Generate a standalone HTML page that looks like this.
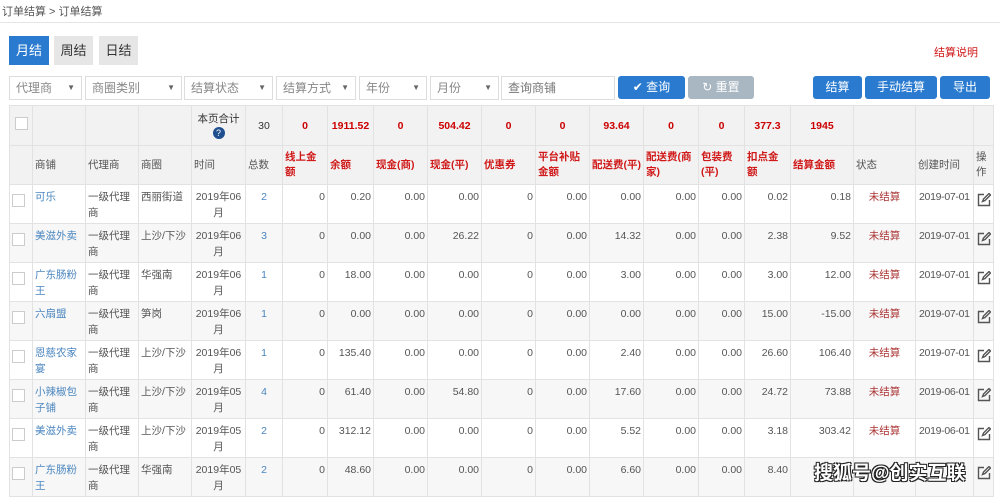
<!DOCTYPE html>
<html><head><meta charset="utf-8"><style>
*{box-sizing:border-box;margin:0;padding:0}
body{width:1000px;height:493px;overflow:hidden;background:#fff;font-family:"Liberation Sans","Noto Sans CJK SC",sans-serif;font-size:11px;color:#333;position:relative}
.a{position:absolute}
.crumb{left:2px;top:3px;font-size:11px;color:#555}
.line{left:0;top:22px;width:1000px;height:1px;background:#e5e5e5}
.tab{top:36px;height:29px;line-height:29px;text-align:center;font-size:13px;background:#e6e6e6;color:#333}
.sel{top:76px;height:24px;border:1px solid #ddd;color:#888;font-size:12px;line-height:22px;padding-left:6px;background:#fff}
.sel i{position:absolute;right:6px;top:0;font-style:normal;font-size:8px;color:#666}
.btn{top:76px;height:23px;line-height:23px;border-radius:3px;color:#fff;text-align:center;font-size:12px;background:#2a7bd0}
table{position:absolute;left:9px;top:105px;border-collapse:collapse;table-layout:fixed;width:984px}
td{border:1px solid #e2e2e2;vertical-align:top;padding:4px 2px 0;font-size:10.5px;line-height:16px;overflow:hidden}
tr.h1 td{height:40px;background:#f2f2f2;text-align:center;vertical-align:middle;color:#c00;font-weight:bold;line-height:14px;padding:0 2px}
tr.h2 td{height:39px;background:#f2f2f2;vertical-align:middle;color:#555;line-height:15px;padding:0 2px}
tr.h2 td.r{color:#d01818;font-weight:bold}
tr.d td{height:39px;color:#555}
tr.d:nth-child(even) td{background:#f7f7f7}
tr.d td.n{text-align:right}
tr.d td.l{color:#4a86bf}
tr.d td.c{text-align:center}
tr.d td.s{color:#a33;text-align:center}
tr.d td.dt{font-size:10.5px;padding:4px 1px 0 3px;white-space:nowrap;letter-spacing:-0.3px}
tr.d td.e{padding:8px 1px 0 3px}
.cb{display:inline-block;width:13px;height:13px;border:1px solid #ccc;background:#fff;margin-top:5px}
</style></head><body>
<div class="a crumb">订单结算 &gt; 订单结算</div>
<div class="a line"></div>
<div class="a tab" style="left:9px;width:40px;background:#2a7bd0;color:#fff">月结</div>
<div class="a tab" style="left:54px;width:39px">周结</div>
<div class="a tab" style="left:99px;width:39px">日结</div>
<div class="a" style="left:934px;top:44px;color:#d01818;font-size:11px">结算说明</div>
<div class="a sel" style="left:9px;width:73px">代理商<i>▼</i></div>
<div class="a sel" style="left:85px;width:97px">商圈类别<i>▼</i></div>
<div class="a sel" style="left:184px;width:89px">结算状态<i>▼</i></div>
<div class="a sel" style="left:276px;width:80px">结算方式<i>▼</i></div>
<div class="a sel" style="left:359px;width:68px">年份<i>▼</i></div>
<div class="a sel" style="left:430px;width:69px">月份<i>▼</i></div>
<div class="a sel" style="left:501px;width:114px;color:#777">查询商铺</div>
<div class="a btn" style="left:618px;width:67px">✔ 查询</div>
<div class="a btn" style="left:688px;width:66px;background:#a9b7c2">↻ 重置</div>
<div class="a btn" style="left:813px;width:49px">结算</div>
<div class="a btn" style="left:865px;width:72px">手动结算</div>
<div class="a btn" style="left:940px;width:50px">导出</div>
<table>
<colgroup><col style="width:23px"><col style="width:53px"><col style="width:53px"><col style="width:53px"><col style="width:54px"><col style="width:37px"><col style="width:45px"><col style="width:46px"><col style="width:54px"><col style="width:54px"><col style="width:54px"><col style="width:54px"><col style="width:54px"><col style="width:55px"><col style="width:46px"><col style="width:46px"><col style="width:63px"><col style="width:62px"><col style="width:58px"><col style="width:20px"></colgroup>
<tr class="h1"><td><span class="cb" style="margin:0"></span></td><td></td><td></td><td></td><td style="color:#333;font-weight:normal">本页合计<br><span style="display:inline-block;width:12px;height:12px;border-radius:6px;background:#1f4f8f;color:#fff;font-size:9px;line-height:12px">?</span></td><td style="color:#333;font-weight:normal">30</td><td>0</td><td>1911.52</td><td>0</td><td>504.42</td><td>0</td><td>0</td><td>93.64</td><td>0</td><td>0</td><td>377.3</td><td>1945</td><td></td><td></td><td></td></tr>
<tr class="h2"><td></td><td>商铺</td><td>代理商</td><td>商圈</td><td>时间</td><td>总数</td><td class="r">线上金额</td><td class="r">余额</td><td class="r">现金(商)</td><td class="r">现金(平)</td><td class="r">优惠券</td><td class="r">平台补贴金额</td><td class="r" style="white-space:nowrap">配送费(平)</td><td class="r">配送费(商家)</td><td class="r">包装费(平)</td><td class="r">扣点金额</td><td class="r">结算金额</td><td>状态</td><td>创建时间</td><td style="padding:2px">操作</td></tr>
<tr class="d"><td><span class="cb"></span></td><td class="l">可乐</td><td>一级代理<br>商</td><td>西丽街道</td><td class="c">2019年06<br>月</td><td class="c l">2</td><td class="n">0</td><td class="n">0.20</td><td class="n">0.00</td><td class="n">0.00</td><td class="n">0</td><td class="n">0.00</td><td class="n">0.00</td><td class="n">0.00</td><td class="n">0.00</td><td class="n">0.02</td><td class="n">0.18</td><td class="s">未结算</td><td class="dt">2019-07-01</td><td class="e"><svg width="14" height="14" viewBox="0 0 14 14" fill="none" stroke="#555" stroke-width="1.4"><path d="M7 1.5H1.5v11h11V7"/><path d="M5.5 8.5l1-2.5 5.5-5.5 1.5 1.5-5.5 5.5z"/></svg></td></tr>
<tr class="d"><td><span class="cb"></span></td><td class="l">美滋外卖</td><td>一级代理<br>商</td><td>上沙/下沙</td><td class="c">2019年06<br>月</td><td class="c l">3</td><td class="n">0</td><td class="n">0.00</td><td class="n">0.00</td><td class="n">26.22</td><td class="n">0</td><td class="n">0.00</td><td class="n">14.32</td><td class="n">0.00</td><td class="n">0.00</td><td class="n">2.38</td><td class="n">9.52</td><td class="s">未结算</td><td class="dt">2019-07-01</td><td class="e"><svg width="14" height="14" viewBox="0 0 14 14" fill="none" stroke="#555" stroke-width="1.4"><path d="M7 1.5H1.5v11h11V7"/><path d="M5.5 8.5l1-2.5 5.5-5.5 1.5 1.5-5.5 5.5z"/></svg></td></tr>
<tr class="d"><td><span class="cb"></span></td><td class="l">广东肠粉<br>王</td><td>一级代理<br>商</td><td>华强南</td><td class="c">2019年06<br>月</td><td class="c l">1</td><td class="n">0</td><td class="n">18.00</td><td class="n">0.00</td><td class="n">0.00</td><td class="n">0</td><td class="n">0.00</td><td class="n">3.00</td><td class="n">0.00</td><td class="n">0.00</td><td class="n">3.00</td><td class="n">12.00</td><td class="s">未结算</td><td class="dt">2019-07-01</td><td class="e"><svg width="14" height="14" viewBox="0 0 14 14" fill="none" stroke="#555" stroke-width="1.4"><path d="M7 1.5H1.5v11h11V7"/><path d="M5.5 8.5l1-2.5 5.5-5.5 1.5 1.5-5.5 5.5z"/></svg></td></tr>
<tr class="d"><td><span class="cb"></span></td><td class="l">六扇盟</td><td>一级代理<br>商</td><td>笋岗</td><td class="c">2019年06<br>月</td><td class="c l">1</td><td class="n">0</td><td class="n">0.00</td><td class="n">0.00</td><td class="n">0.00</td><td class="n">0</td><td class="n">0.00</td><td class="n">0.00</td><td class="n">0.00</td><td class="n">0.00</td><td class="n">15.00</td><td class="n">-15.00</td><td class="s">未结算</td><td class="dt">2019-07-01</td><td class="e"><svg width="14" height="14" viewBox="0 0 14 14" fill="none" stroke="#555" stroke-width="1.4"><path d="M7 1.5H1.5v11h11V7"/><path d="M5.5 8.5l1-2.5 5.5-5.5 1.5 1.5-5.5 5.5z"/></svg></td></tr>
<tr class="d"><td><span class="cb"></span></td><td class="l">恩慈农家<br>宴</td><td>一级代理<br>商</td><td>上沙/下沙</td><td class="c">2019年06<br>月</td><td class="c l">1</td><td class="n">0</td><td class="n">135.40</td><td class="n">0.00</td><td class="n">0.00</td><td class="n">0</td><td class="n">0.00</td><td class="n">2.40</td><td class="n">0.00</td><td class="n">0.00</td><td class="n">26.60</td><td class="n">106.40</td><td class="s">未结算</td><td class="dt">2019-07-01</td><td class="e"><svg width="14" height="14" viewBox="0 0 14 14" fill="none" stroke="#555" stroke-width="1.4"><path d="M7 1.5H1.5v11h11V7"/><path d="M5.5 8.5l1-2.5 5.5-5.5 1.5 1.5-5.5 5.5z"/></svg></td></tr>
<tr class="d"><td><span class="cb"></span></td><td class="l">小辣椒包<br>子铺</td><td>一级代理<br>商</td><td>上沙/下沙</td><td class="c">2019年05<br>月</td><td class="c l">4</td><td class="n">0</td><td class="n">61.40</td><td class="n">0.00</td><td class="n">54.80</td><td class="n">0</td><td class="n">0.00</td><td class="n">17.60</td><td class="n">0.00</td><td class="n">0.00</td><td class="n">24.72</td><td class="n">73.88</td><td class="s">未结算</td><td class="dt">2019-06-01</td><td class="e"><svg width="14" height="14" viewBox="0 0 14 14" fill="none" stroke="#555" stroke-width="1.4"><path d="M7 1.5H1.5v11h11V7"/><path d="M5.5 8.5l1-2.5 5.5-5.5 1.5 1.5-5.5 5.5z"/></svg></td></tr>
<tr class="d"><td><span class="cb"></span></td><td class="l">美滋外卖</td><td>一级代理<br>商</td><td>上沙/下沙</td><td class="c">2019年05<br>月</td><td class="c l">2</td><td class="n">0</td><td class="n">312.12</td><td class="n">0.00</td><td class="n">0.00</td><td class="n">0</td><td class="n">0.00</td><td class="n">5.52</td><td class="n">0.00</td><td class="n">0.00</td><td class="n">3.18</td><td class="n">303.42</td><td class="s">未结算</td><td class="dt">2019-06-01</td><td class="e"><svg width="14" height="14" viewBox="0 0 14 14" fill="none" stroke="#555" stroke-width="1.4"><path d="M7 1.5H1.5v11h11V7"/><path d="M5.5 8.5l1-2.5 5.5-5.5 1.5 1.5-5.5 5.5z"/></svg></td></tr>
<tr class="d"><td><span class="cb"></span></td><td class="l">广东肠粉<br>王</td><td>一级代理<br>商</td><td>华强南</td><td class="c">2019年05<br>月</td><td class="c l">2</td><td class="n">0</td><td class="n">48.60</td><td class="n">0.00</td><td class="n">0.00</td><td class="n">0</td><td class="n">0.00</td><td class="n">6.60</td><td class="n">0.00</td><td class="n">0.00</td><td class="n">8.40</td><td class="n"></td><td class="s"></td><td class="dt"></td><td class="e"><svg width="14" height="14" viewBox="0 0 14 14" fill="none" stroke="#555" stroke-width="1.4"><path d="M7 1.5H1.5v11h11V7"/><path d="M5.5 8.5l1-2.5 5.5-5.5 1.5 1.5-5.5 5.5z"/></svg></td></tr>
</table>
<div class="a" style="left:814px;top:458px;font-size:19px;font-weight:bold;color:#fff;text-shadow:1px 1px 0 #222,-1px -1px 0 #222,1px -1px 0 #222,-1px 1px 0 #222">搜狐号@创实互联</div>
</body></html>
